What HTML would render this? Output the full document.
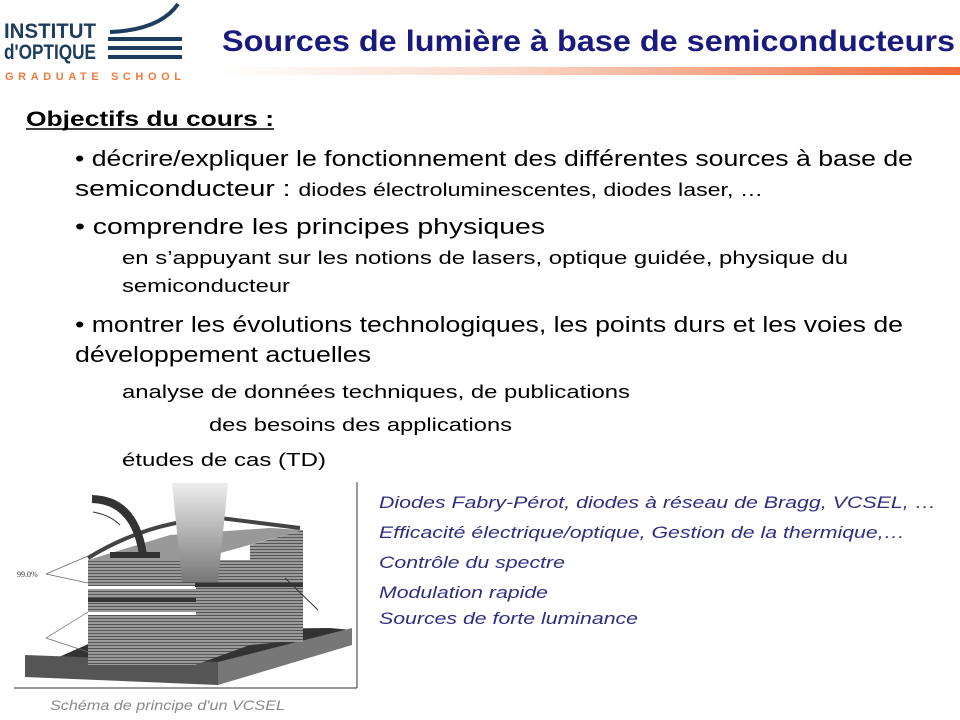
<!DOCTYPE html>
<html><head><meta charset="utf-8"><style>
body{margin:0;width:960px;height:720px;overflow:hidden;background:#fff;font-family:"Liberation Sans",Arial,sans-serif;}
svg{position:absolute;left:0;top:0}
</style></head><body>
<svg width="960" height="720" viewBox="0 0 960 720" font-family="Liberation Sans, Arial, sans-serif">
<defs>
<linearGradient id="g" x1="0" x2="1"><stop offset="0" stop-color="#fff"/><stop offset="0.4" stop-color="#fbd8c8"/><stop offset="1" stop-color="#f26a3a"/></linearGradient>
<linearGradient id="beam" x1="0" y1="0" x2="0" y2="1"><stop offset="0" stop-color="#eee"/><stop offset="1" stop-color="#777"/></linearGradient>
<pattern id="st" width="4" height="3" patternUnits="userSpaceOnUse"><rect width="4" height="3" fill="#9a9a9a"/><rect width="4" height="1" fill="#555"/></pattern>
</defs>
<g lengthAdjust="spacingAndGlyphs">
<!-- logo -->
<text x="4" y="38" font-size="21" font-weight="bold" fill="#1d3c5e" textLength="92" lengthAdjust="spacingAndGlyphs">INSTITUT</text>
<text x="4" y="59" font-size="21" font-weight="bold" fill="#1d3c5e" textLength="92" lengthAdjust="spacingAndGlyphs">d'OPTIQUE</text>
<text x="5" y="80" font-size="11" font-weight="bold" fill="#f07a3c" textLength="176" lengthAdjust="spacing">GRADUATE SCHOOL</text>
</g>
<path d="M110 32 Q160 30 178 4" stroke="#1d3c5e" stroke-width="4" fill="none"/>
<rect x="108" y="37" width="74" height="4" fill="#1d3c5e"/>
<rect x="108" y="46" width="74" height="4" fill="#1d3c5e"/>
<rect x="108" y="55" width="74" height="4" fill="#1d3c5e"/>
<!-- title -->
<text x="222" y="51" font-size="30" font-weight="bold" fill="#1a1a7e" textLength="733" lengthAdjust="spacingAndGlyphs">Sources de lumière à base de semiconducteurs</text>
<rect x="215" y="67" width="745" height="8" fill="url(#g)"/>
<!-- body -->
<g fill="#000">
<text x="26" y="126" font-size="21" font-weight="bold" textLength="248" lengthAdjust="spacingAndGlyphs">Objectifs du cours :</text>
<line x1="26" y1="129" x2="274" y2="129" stroke="#000" stroke-width="1.5"/>
<text x="75" y="166" font-size="22" textLength="838" lengthAdjust="spacingAndGlyphs">• décrire/expliquer le fonctionnement des différentes sources à base de</text>
<text x="75" y="196" font-size="22" textLength="688" lengthAdjust="spacingAndGlyphs"><tspan>semiconducteur : </tspan><tspan font-size="18">diodes électroluminescentes, diodes laser, …</tspan></text>
<text x="75" y="234" font-size="22" textLength="470" lengthAdjust="spacingAndGlyphs">• comprendre les principes physiques</text>
<text x="122" y="264" font-size="18" textLength="726" lengthAdjust="spacingAndGlyphs">en s’appuyant sur les notions de lasers, optique guidée, physique du</text>
<text x="122" y="292" font-size="18" textLength="168" lengthAdjust="spacingAndGlyphs">semiconducteur</text>
<text x="75" y="332" font-size="22" textLength="828" lengthAdjust="spacingAndGlyphs">• montrer les évolutions technologiques, les points durs et les voies de</text>
<text x="75" y="362" font-size="22" textLength="296" lengthAdjust="spacingAndGlyphs">développement actuelles</text>
<text x="122" y="398" font-size="18" textLength="508" lengthAdjust="spacingAndGlyphs">analyse de données techniques, de publications</text>
<text x="209" y="431" font-size="18" textLength="303" lengthAdjust="spacingAndGlyphs">des besoins des applications</text>
<text x="122" y="466" font-size="18" textLength="204" lengthAdjust="spacingAndGlyphs">études de cas (TD)</text>
</g>
<g fill="#2e2e80" font-style="italic" font-size="17">
<text x="379" y="508" textLength="557" lengthAdjust="spacingAndGlyphs">Diodes Fabry-Pérot, diodes à réseau de Bragg, VCSEL, …</text>
<text x="379" y="538" textLength="526" lengthAdjust="spacingAndGlyphs">Efficacité électrique/optique, Gestion de la thermique,…</text>
<text x="379" y="568" textLength="186" lengthAdjust="spacingAndGlyphs">Contrôle du spectre</text>
<text x="379" y="598" textLength="169" lengthAdjust="spacingAndGlyphs">Modulation rapide</text>
<text x="379" y="624" textLength="259" lengthAdjust="spacingAndGlyphs">Sources de forte luminance</text>
</g>
<!-- VCSEL image -->
<line x1="357" y1="482" x2="357" y2="688" stroke="#333"/>
<line x1="14" y1="688" x2="357" y2="688" stroke="#333"/>
<polygon points="25,672 218,678 352,630 330,628 120,630" fill="#333"/>
<polygon points="25,655 25,677 218,685 218,662" fill="#555"/>
<polygon points="218,662 352,628 352,645 218,685" fill="#777"/>
<polygon points="88,560 88,665 195,665 195,560" fill="url(#st)"/>
<polygon points="195,560 195,665 250,645 250,560" fill="url(#st)"/>
<polygon points="195,583 195,643 303,642 303,583" fill="url(#st)"/>
<polygon points="250,545 303,530 303,640 250,645" fill="url(#st)"/>
<polygon points="88,560 195,560 303,530 270,528 170,535" fill="#999"/>
<rect x="88" y="586" width="108" height="3" fill="#fff"/>
<rect x="88" y="612" width="108" height="3" fill="#fff"/>
<rect x="88" y="598" width="108" height="4" fill="#333"/>
<rect x="195" y="583" width="108" height="4" fill="#333"/>
<path d="M88 558 Q150 520 220 518 L300 528" stroke="#444" stroke-width="4" fill="none"/>
<rect x="110" y="552" width="50" height="6" fill="#333"/>
<path d="M92 499 Q135 500 143 555" stroke="#333" stroke-width="8" fill="none"/>
<path d="M93 512 Q110 515 120 525" stroke="#333" stroke-width="1" fill="none"/>
<polygon points="172,483 228,483 218,582 182,582" fill="url(#beam)"/>
<text x="17" y="577" font-size="8" font-family="Liberation Serif, serif" fill="#333">99.0%</text>
<path d="M46 574 L88 556 M46 574 L88 583 M46 638 L88 612 M46 638 L88 652" stroke="#666" stroke-width="0.7" fill="none"/>
<path d="M285 578 L318 610" stroke="#333" stroke-width="1"/>
<text x="50" y="710" font-size="14" font-style="italic" fill="#888" textLength="235" lengthAdjust="spacingAndGlyphs">Schéma de principe d'un VCSEL</text>
</svg>
</body></html>
